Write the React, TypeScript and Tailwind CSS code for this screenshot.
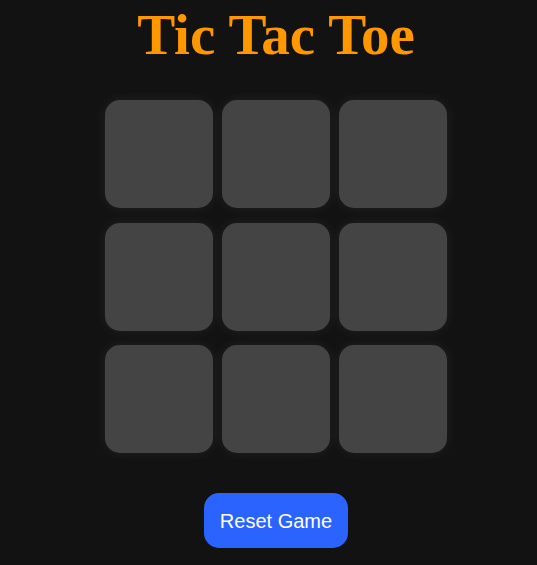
import React from "react";

export default function App() {
  const cells = Array.from({ length: 9 });
  return (
    <div className="min-h-[565px] w-full bg-[#121212] flex flex-col items-center pl-[15px]">
      <h1
        className="text-[57px] leading-[63px] font-bold text-[#ff9800] mt-[3px]"
        style={{ fontFamily: '"Liberation Serif", "Times New Roman", serif' }}
      >
        Tic Tac Toe
      </h1>
      <div className="mt-[34px] grid grid-cols-[108px_108px_108px] gap-x-[9px] gap-y-[14.5px]">
        {cells.map((_, i) => (
          <button
            key={i}
            className="w-[108px] h-[108px] rounded-[15px] bg-[#444444] shadow-[0_0_14px_rgba(255,255,255,0.07)]"
          />
        ))}
      </div>
      <button
        className="mt-[40px] h-[55px] px-[16px] rounded-[15px] bg-[#2b63ff] text-white text-[20px]"
        style={{ fontFamily: '"Liberation Sans", Arial, sans-serif' }}
      >
        Reset Game
      </button>
    </div>
  );
}
